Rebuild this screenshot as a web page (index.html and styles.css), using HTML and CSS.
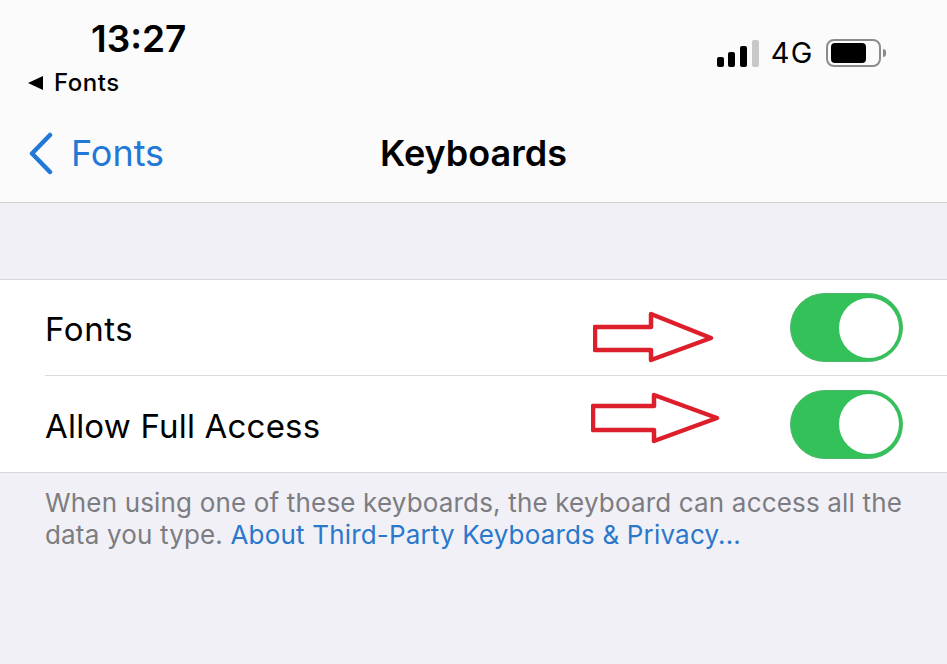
FILE: index.html
```html
<!DOCTYPE html>
<html lang="en">
<head>
  <meta charset="UTF-8">
  <title>Keyboards</title>
  <link rel="stylesheet" href="styles.css">
</head>
<body>
  <header class="top">
    <div class="status">
      <div class="status-left">
        <div class="time">13:27</div>
        <div class="return"><span class="return-arrow"></span>Fonts</div>
      </div>
      <div class="status-right">
        <div class="signal">
          <span class="bar bar1"></span>
          <span class="bar bar2"></span>
          <span class="bar bar3"></span>
          <span class="bar bar4"></span>
        </div>
        <span class="network">4G</span>
        <div class="battery"><span class="battery-level"></span></div>
        <span class="battery-cap"></span>
      </div>
    </div>
    <nav class="nav">
      <div class="back">
        <svg class="chevron" width="28" height="44" viewBox="0 0 28 44">
          <path d="M23 4 L5 22.500 L23 41" fill="none" stroke="#2178d6" stroke-width="4.500" stroke-linecap="round" stroke-linejoin="round"/>
        </svg>
        <span>Fonts</span>
      </div>
      <h1 class="title">Keyboards</h1>
    </nav>
  </header>

  <section class="list">
    <div class="row row-first">
      <span class="label">Fonts</span>
      <div class="switch"><span class="knob"></span></div>
      <svg class="arrow arrow1" width="124" height="54" viewBox="0 0 124 54">
        <path d="M2 16 H58 V3 L118 27 L58 49 V39 H2 Z" fill="#fff" stroke="#dc1f2b" stroke-width="4.500" stroke-linejoin="round"/>
      </svg>
    </div>
    <div class="row">
      <span class="label">Allow Full Access</span>
      <div class="switch"><span class="knob"></span></div>
      <svg class="arrow arrow2" width="134" height="54" viewBox="0 0 134 54">
        <path d="M2 14 H63 V3 L126 26 L63 49 V38 H2 Z" fill="#fff" stroke="#dc1f2b" stroke-width="4.500" stroke-linejoin="round"/>
      </svg>
    </div>
  </section>

  <p class="note">When using one of these keyboards, the keyboard can access all the<br>
    data you type. <a class="note-link" href="#">About Third-Party Keyboards &amp; Privacy...</a></p>
</body>
</html>
```

FILE: styles.css
```css
html, body {
  height: 100%;
}

body {
  margin: 0;
  background: #f0f0f6;
  color: #000;
  font-family: Inter, "Noto Sans", sans-serif;
  overflow: hidden;
}

.top {
  height: 202px;
  background: #fbfbfb;
  border-bottom: 1px solid #cfcfcf;
}

.status {
  display: flex;
  justify-content: space-between;
  height: 106px;
}

.status-left {
  padding: 17px 0 0 28px;
}

.time {
  margin-left: 63px;
  font-size: 37px;
  line-height: 44px;
  font-weight: 600;
}

.return {
  display: flex;
  align-items: center;
  gap: 11px;
  margin-top: 6px;
  font-size: 24px;
  letter-spacing: .5px;
  line-height: 32px;
  font-weight: 500;
}

.return-arrow {
  width: 0;
  height: 0;
  border-top: 7px solid transparent;
  border-bottom: 7px solid transparent;
  border-right: 15px solid #000;
}

.status-right {
  display: flex;
  align-items: center;
  height: 28px;
  margin: 39px 61px 0 0;
}

.signal {
  display: flex;
  align-items: flex-end;
  gap: 4.700px;
  height: 27px;
}

.bar {
  width: 7px;
  background: #000;
  border-radius: 2px;
}

.bar1 { height: 10px; }
.bar2 { height: 15px; }
.bar3 { height: 21px; }
.bar4 { height: 27px; background: #c8c8c8; }

.network {
  margin-left: 12px;
  font-size: 29px;
  letter-spacing: 1.500px;
  line-height: 30px;
}

.battery {
  display: flex;
  align-items: center;
  width: 55px;
  height: 28px;
  margin-left: 12px;
  padding: 0 3px;
  box-sizing: border-box;
  border: 2px solid #8c8c8c;
  border-radius: 8px;
}

.battery-level {
  width: 35px;
  height: 20px;
  background: #000;
  border-radius: 4px;
}

.battery-cap {
  width: 3px;
  height: 8px;
  margin-left: 2px;
  background: #8c8c8c;
  border-radius: 0 3px 3px 0;
}

.nav {
  position: relative;
  display: flex;
  align-items: center;
  justify-content: center;
  height: 94px;
}

.back {
  position: absolute;
  left: 27px;
  top: 25px;
  display: flex;
  align-items: center;
  gap: 16px;
  color: #2178d6;
  font-size: 36px;
  line-height: 44px;
}

.title {
  margin: 0;
  font-size: 36px;
  font-weight: 600;
  line-height: 44px;
}

.list {
  margin-top: 76px;
  background: #fff;
  border-top: 1px solid #d6d6d6;
  border-bottom: 1px solid #d6d6d6;
}

.row {
  position: relative;
  display: flex;
  align-items: center;
  justify-content: space-between;
  height: 96px;
  margin-left: 45px;
  padding-right: 44px;
}

.row-first {
  height: 95px;
  border-bottom: 1px solid #dcdcdc;
}

.label {
  position: relative;
  top: 2px;
  font-size: 33px;
  letter-spacing: .2px;
}

.row-first .label {
  top: 1px;
  letter-spacing: .6px;
}

.switch {
  display: flex;
  justify-content: flex-end;
  align-items: center;
  width: 113px;
  height: 69px;
  padding: 3px;
  box-sizing: border-box;
  background: #34c159;
  border: 1px solid #4db86c;
  border-radius: 35px;
}

.knob {
  width: 60px;
  height: 60px;
  background: #fff;
  border-radius: 50%;
}

.arrow {
  position: absolute;
}

.arrow1 {
  left: 548px;
  top: 31px;
}

.arrow2 {
  left: 546px;
  top: 16px;
}

.note {
  margin: 14px 30px 0 45px;
  color: #7c7c81;
  font-size: 26px;
  letter-spacing: .17px;
  line-height: 32px;
}

.note-link {
  color: #2a78cc;
  text-decoration: none;
}
```
